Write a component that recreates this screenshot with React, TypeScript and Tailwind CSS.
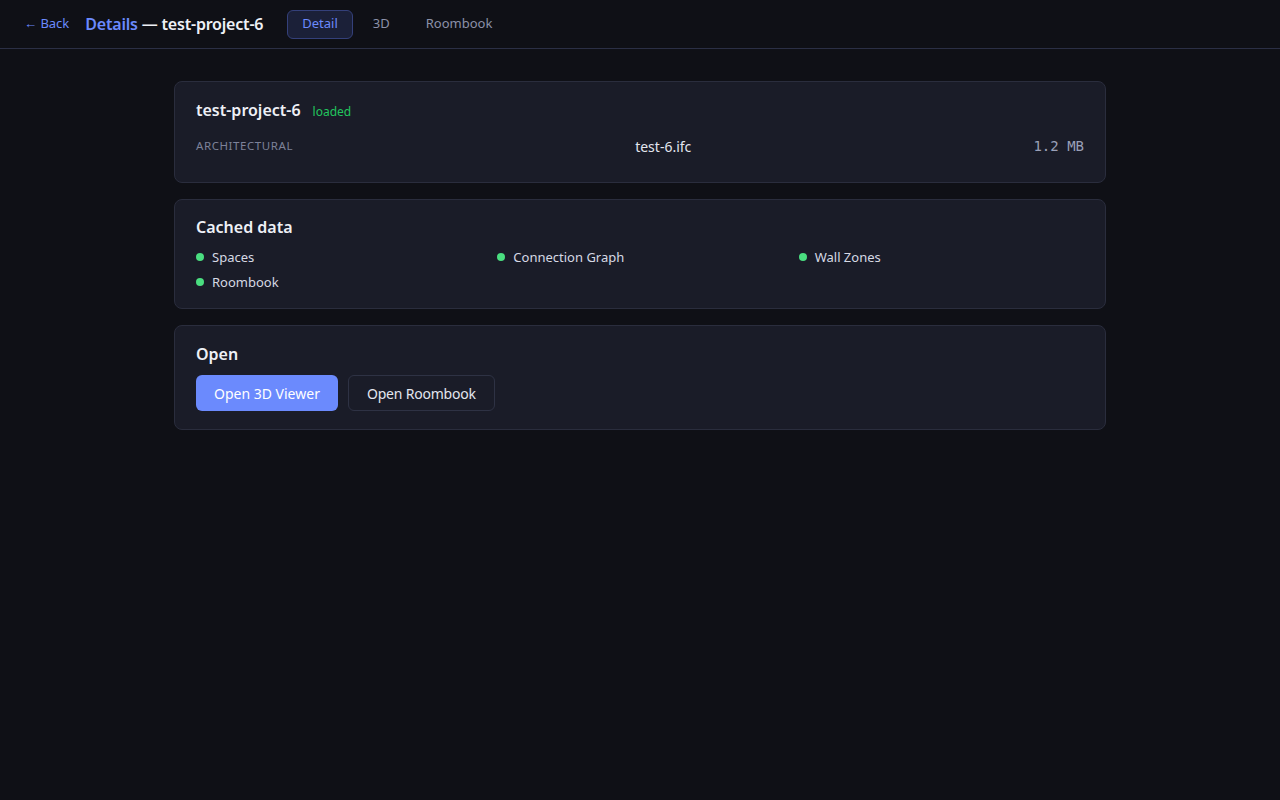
const cached = ['Spaces', 'Connection Graph', 'Wall Zones', 'Roombook']

export default function App() {
  return (
    <div
      className="min-h-screen bg-[#0f1016] text-[#e3e6ef]"
      style={{ fontFamily: '"Noto Sans", "Open Sans", sans-serif' }}
    >
      <header className="h-[49px] flex items-center px-6 border-b border-[#2b2f45]">
        <button className="text-[13px] text-[#6b8afd]">← Back</button>
        <h1 className="ml-4 text-[16px] font-semibold tracking-[-0.2px]">
          <span className="text-[#6b8afd]">Details</span>
          <span className="text-[#eef0f6]"> — test-project-6</span>
        </h1>
        <nav className="ml-6 flex items-center gap-1.5 text-[13px]">
          <span className="h-[29px] px-[14px] flex items-center rounded-md border border-[#34407a] bg-[#1b2038] text-[#6b8afd]">
            Detail
          </span>
          <span className="h-[29px] px-[14px] flex items-center text-[#8b90a8]">3D</span>
          <span className="h-[29px] px-[14px] ml-0.5 flex items-center text-[#8b90a8]">Roombook</span>
        </nav>
      </header>

      <main className="max-w-[932px] mx-auto pt-8 flex flex-col gap-4">
        <section className="bg-[#1a1c28] border border-[#2a2d3d] rounded-lg px-[21px] pt-4 pb-[26px]">
          <div className="flex items-baseline gap-3">
            <h2 className="text-[16px] font-semibold text-[#eef0f6]">test-project-6</h2>
            <span className="text-[12px] text-[#22c55e]">loaded</span>
          </div>
          <div className="mt-[14px] h-5 flex items-center justify-between">
            <span className="text-[11.5px] uppercase tracking-wider text-[#7d8299]">Architectural</span>
            <span className="text-[14px] text-[#e3e6ef]">test-6.ifc</span>
            <span className="text-[14px] text-[#9aa0b8]" style={{ fontFamily: '"DejaVu Sans Mono", monospace' }}>
              1.2 MB
            </span>
          </div>
        </section>

        <section className="bg-[#1a1c28] border border-[#2a2d3d] rounded-lg px-[21px] pt-[15px] pb-4">
          <h2 className="text-[16px] font-semibold text-[#eef0f6]">Cached data</h2>
          <ul className="mt-2 grid grid-cols-3 gap-x-4 gap-y-[5px]">
            {cached.map((c) => (
              <li key={c} className="flex items-center gap-2 text-[13px] text-[#d6d9e4] leading-5">
                <span className="w-2 h-2 rounded-full bg-[#4ade80]" />
                {c}
              </li>
            ))}
          </ul>
        </section>

        <section className="bg-[#1a1c28] border border-[#2a2d3d] rounded-lg px-[21px] pt-4 pb-[18px]">
          <h2 className="text-[16px] font-semibold text-[#eef0f6]">Open</h2>
          <div className="mt-[9px] flex gap-[10px]">
            <button className="h-9 px-[18px] rounded-md bg-[#6b8afd] text-[14px] text-white">Open 3D Viewer</button>
            <button className="h-9 px-[18px] rounded-md border border-[#2e3244] text-[14px] text-[#e3e6ef] tracking-[-0.2px]">
              Open Roombook
            </button>
          </div>
        </section>
      </main>
    </div>
  )
}
